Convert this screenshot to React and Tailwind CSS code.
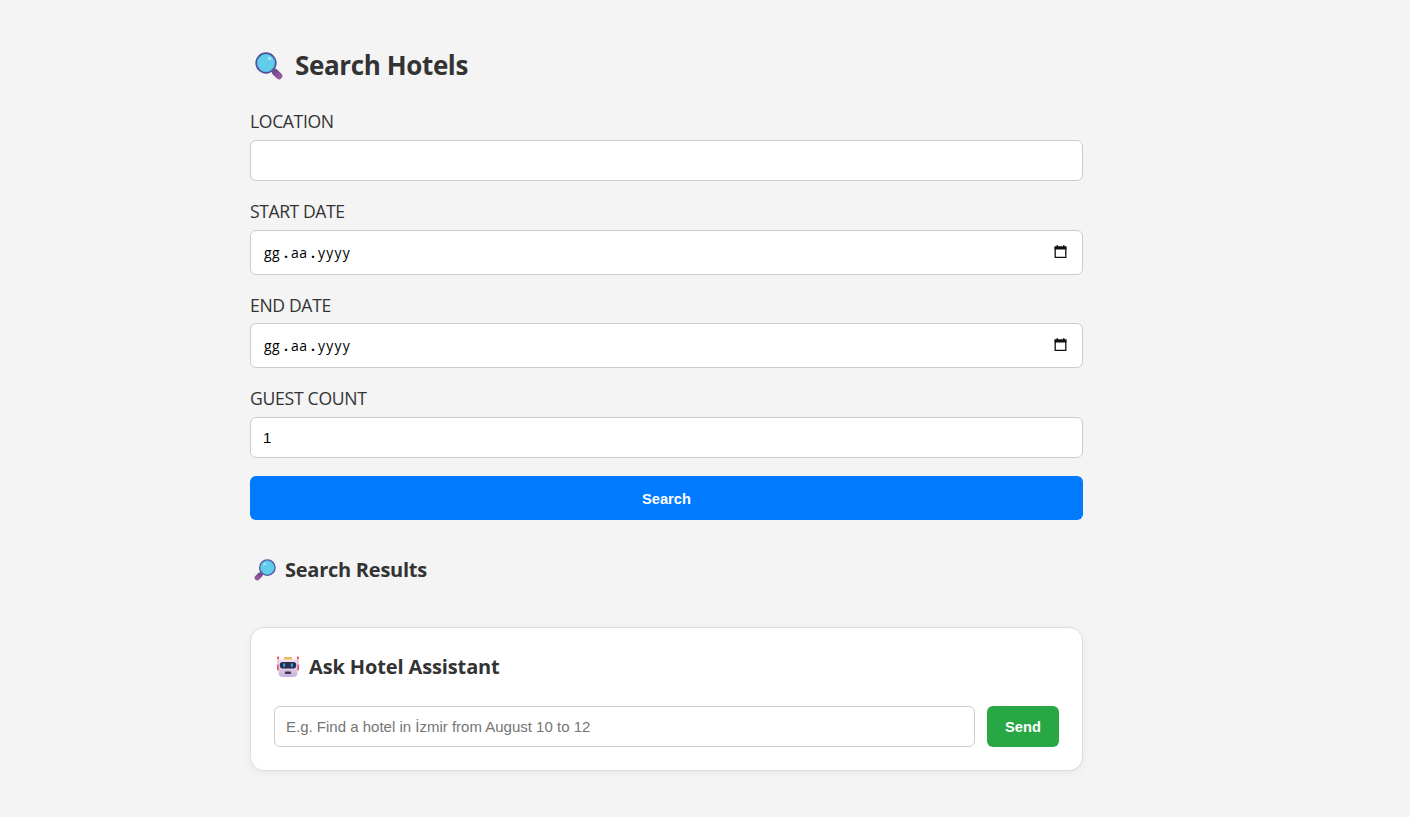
import React, { useId } from 'react';

function Magnifier({ className }) {
  const id = useId();
  return (
    <svg viewBox="0 0 28 28" className={className} aria-hidden="true">
      <defs>
        <linearGradient id={id} x1="0" y1="0" x2="1" y2="1">
          <stop offset="0" stopColor="#7a4a90" />
          <stop offset="1" stopColor="#94579b" />
        </linearGradient>
      </defs>
      <path d="M17 17l3 3" stroke="#53457f" strokeWidth="3" />
      <path d="M20.3 20.3l3.7 3.600" stroke={`url(#${id})`} strokeWidth="6.600" strokeLinecap="round" />
      <circle cx="11" cy="11" r="9.8" fill="#62cdeb" stroke="#53509a" strokeWidth="1.7" />
      <circle cx="11" cy="11" r="8.6" fill="none" stroke="#4fb6dc" strokeWidth=".7" />
      <ellipse cx="14.6" cy="6.4" rx="2" ry="1.5" fill="#a5e3f5" transform="rotate(35 14.6 6.4)" />
    </svg>
  );
}

function Robot({ className }) {
  const id = useId();
  return (
    <svg viewBox="0 0 22 22" className={className} aria-hidden="true">
      <defs>
        <linearGradient id={id} x1="0" y1="0" x2="0" y2="1">
          <stop offset="0" stopColor="#efe9f2" />
          <stop offset="1" stopColor="#c9b1de" />
        </linearGradient>
      </defs>
      <path d="M1.1 2v9M20.9 2v9" stroke="#e8709a" strokeWidth="1" />
      <circle cx="1.1" cy="1.7" r="1.1" fill="#e8386b" />
      <circle cx="20.9" cy="1.7" r="1.1" fill="#e8386b" />
      <rect x="0" y="8.500" width="3" height="6" rx="1" fill="#ee3f78" />
      <rect x="19" y="8.500" width="3" height="6" rx="1" fill="#ee3f78" />
      <path d="M3.500 2.500h15q2 0 2 2V17q0 4-4.500 4H6q-4.500 0-4.500-4V4.500q0-2 2-2z" fill={`url(#${id})`} />
      <rect x="7" y="1" width="8" height="2.600" rx="1" fill="#f3b653" />
      <rect x="2.800" y="6" width="16.400" height="6.400" rx="2.800" fill="#2d2b4b" />
      <rect x="6" y="7.300" width="2.200" height="3.700" rx="1" fill="#26a4ee" />
      <rect x="13.800" y="7.300" width="2.200" height="3.700" rx="1" fill="#26a4ee" />
      <rect x="7.800" y="15.500" width="6.400" height="2.400" rx="1" fill="#403453" />
    </svg>
  );
}

function CalendarIcon() {
  return (
    <svg viewBox="0 0 13 14" className="mb-[1px] h-[14px] w-[13px]" aria-hidden="true">
      <path d="M1.200 2.200h10.600v10.200H1.200z" fill="none" stroke="#111" strokeWidth="1.300" />
      <path d="M.6 1.600h11.800v3H.6zM2.500.3h1.500v2H2.500zM9 .3h1.500v2H9z" fill="#111" />
    </svg>
  );
}

const labelClass =
  "block h-[24px] whitespace-nowrap font-['Open_Sans'] text-[17.6px] font-normal text-[#333]";
const fieldClass = 'w-full rounded-[6px] border border-[#ccc] bg-white';

function DateField({ label, labelClassName, className }) {
  return (
    <div className={className}>
      <div className={`${labelClass} ${labelClassName}`}>{label}</div>
      <div className={`${fieldClass} mt-[6px] flex h-[45px] items-center justify-between pl-[13px] pr-[15px]`}>
        <div className="flex font-['Open_Sans'] text-[14px] leading-[20px] text-black">
          <span className="w-[17px] tracking-[0.3px]">gg</span>
          <span className="w-[10px] text-center font-bold">.</span>
          <span className="w-[17px] tracking-[0.4px]">aa</span>
          <span className="w-[10px] text-center font-bold">.</span>
          <span className="tracking-[1.2px]">yyyy</span>
        </div>
        <CalendarIcon />
      </div>
    </div>
  );
}

export default function App() {
  return (
    <div className="h-[817px] overflow-hidden bg-[#f4f4f4] text-[#333]">
      <main className="ml-[250px] w-[833px] pt-[46px]">
        <h1 className="flex h-[40px] items-center pl-[5px] font-['Open_Sans'] text-[26px] font-bold leading-[40px]">
          <Magnifier className="mr-[12px] h-[28px] w-[28px]" />
          <span className="pb-[2px] tracking-[-0.38px]">Search Hotels</span>
        </h1>
        <div className="mt-[24px]">
          <div className={`${labelClass} leading-[22px] tracking-[-0.37px]`}>LOCATION</div>
          <input aria-label="Location" className={`${fieldClass} mt-[6px] block h-[41px] px-3`} />
        </div>
        <DateField label="START DATE" labelClassName="leading-[22px] tracking-[-0.43px]" className="mt-[19px]" />
        <DateField label="END DATE" labelClassName="leading-[24px] tracking-[-0.35px]" className="mt-[18px]" />
        <div className="mt-[19px]">
          <div className={`${labelClass} leading-[22px] tracking-[-0.28px]`}>GUEST COUNT</div>
          <div className={`${fieldClass} mt-[6px] flex h-[41px] items-center px-[12px] pt-[2px] font-['Liberation_Sans'] text-[15px] text-black`}>
            1
          </div>
        </div>
        <button className="mt-[18px] block h-[44px] w-full rounded-[6px] bg-[#007bff] pt-[2px] font-['Liberation_Sans'] text-[14.67px] font-bold text-white">
          Search
        </button>
        <h2 className="mt-[35px] flex h-[30px] items-center pl-[4px] font-['Open_Sans'] text-[20px] font-bold leading-[30px]">
          <Magnifier className="mr-[9px] h-[22px] w-[22px] -scale-x-100" />
          <span className="tracking-[-0.25px]">Search Results</span>
        </h2>
        <section className="mt-[42px] h-[144px] rounded-[14px] border border-[#ddd] bg-white px-[23px] pt-[23px] shadow-[0_2px_8px_rgba(0,0,0,0.05)]">
          <h2 className="flex h-[30px] items-center pl-[3px] font-['Open_Sans'] text-[20px] font-bold leading-[30px]">
            <Robot className="mr-[10px] mt-[1px] h-[22px] w-[22px]" />
            <span className="pt-[2px] tracking-[-0.13px]">Ask Hotel Assistant</span>
          </h2>
          <div className="mt-[25px] flex h-[41px] gap-3">
            <input
              aria-label="Message"
              placeholder="E.g. Find a hotel in İzmir from August 10 to 12"
              className="min-w-0 flex-1 rounded-[6px] border border-[#ccc] bg-white px-[11px] pt-[2px] font-['Liberation_Sans'] text-[15px] placeholder:text-[#757575]"
            />
            <button className="w-[72px] rounded-[6px] bg-[#28a745] font-['Liberation_Sans'] text-[14.67px] font-bold text-white">
              Send
            </button>
          </div>
        </section>
      </main>
    </div>
  );
}
